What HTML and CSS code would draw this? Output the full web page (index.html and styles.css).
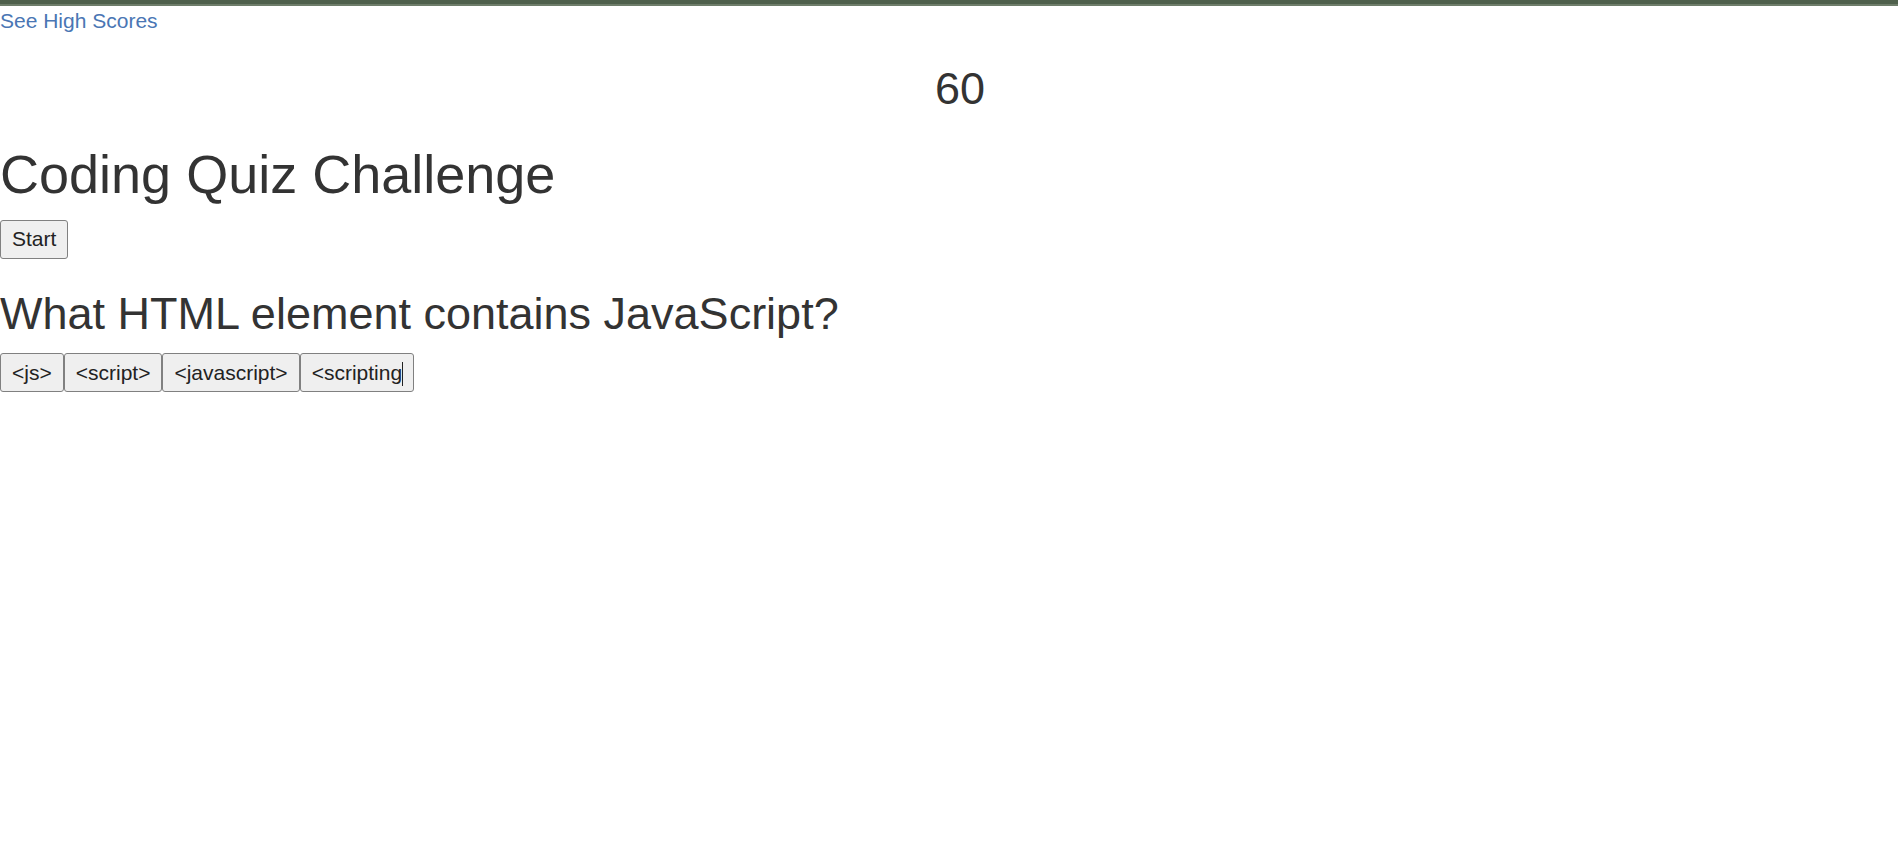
FILE: index.html
```html
<!DOCTYPE html>
<html lang="en">
<head>
<meta charset="utf-8">
<title>Coding Quiz Challenge</title>
<link rel="stylesheet" href="styles.css">
</head>
<body>
<div class="topbar"></div>
<a class="scores-link" href="#">See High Scores</a>
<h2 class="timer">60</h2>
<h1 class="title">Coding Quiz Challenge</h1>
<button class="btn" type="button">Start</button>
<h2 class="question">What HTML element contains JavaScript?</h2>
<div class="answers"><button class="btn" type="button">&lt;js&gt;</button><button class="btn" type="button">&lt;script&gt;</button><button class="btn" type="button">&lt;javascript&gt;</button><button class="btn" type="button">&lt;scripting<span class="caret"></span></button></div>
</body>
</html>
```
FILE: styles.css
```css
html, body {
  margin: 0;
  padding: 0;
  background: #ffffff;
}

body {
  font-family: "Liberation Sans", Arial, Helvetica, sans-serif;
  font-size: 21px;
  line-height: 30px;
  color: #333333;
}

.topbar {
  height: 4px;
  background: #4f604c;
  border-bottom: 2px solid #6e7d6a;
}

.scores-link {
  display: block;
  width: max-content;
  color: #4a76b4;
  text-decoration: none;
}

h1, h2 {
  font-weight: 400;
  line-height: 1.1;
  margin: 0;
}

.timer {
  font-size: 45px;
  text-align: center;
  padding-left: 22px;
  margin-top: 28px;
  margin-bottom: 15px;
}

.title {
  font-size: 54px;
  margin-top: 31px;
  margin-bottom: 16px;
}

.question {
  font-size: 45px;
  margin-top: 30px;
  margin-bottom: 15px;
}

.btn {
  font-family: inherit;
  font-size: 21px;
  line-height: 30px;
  color: #222222;
  background: #efefef;
  border: 1px solid #808080;
  border-radius: 3px;
  padding: 3.5px 11px;
  margin: 0;
  display: inline-block;
}

.answers {
  display: flex;
}

.caret {
  display: inline-block;
  width: 1px;
  height: 24px;
  background: #222222;
  vertical-align: -6px;
  margin-right: -1px;
}
```
